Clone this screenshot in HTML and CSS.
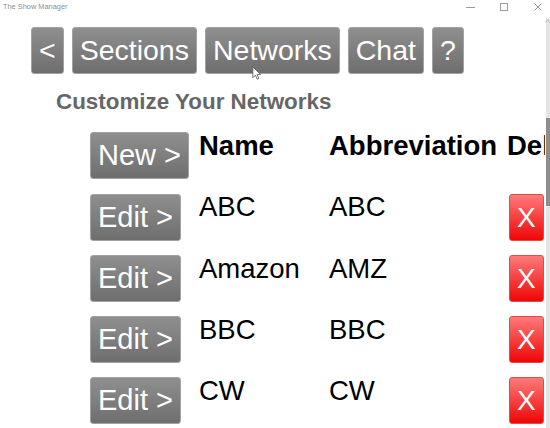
FILE: index.html
```html
<!DOCTYPE html>
<html>
<head>
<meta charset="utf-8">
<link rel="stylesheet" href="styles.css">
</head>
<body>
<div class="window">
  <div class="titlebar">
    <span class="title">The Show Manager</span>
    <div class="controls">
      <svg class="ctl ctl-min" width="9" height="9" viewBox="0 0 9 9"><line x1="0" y1="4.5" x2="9" y2="4.5" stroke="#9a9a9a" stroke-width="1"/></svg>
      <svg class="ctl ctl-max" width="8" height="8" viewBox="0 0 8 8"><rect x="0.5" y="0.5" width="7" height="7" fill="none" stroke="#9a9a9a" stroke-width="1"/></svg>
      <svg class="ctl ctl-close" width="8" height="8" viewBox="0 0 8 8"><path d="M0.5 0.5 L7.5 7.5 M7.5 0.5 L0.5 7.5" stroke="#9a9a9a" stroke-width="1"/></svg>
    </div>
  </div>
  <div class="client">
    <div class="content">
      <nav class="nav">
        <button class="btn">&lt;</button>
        <button class="btn">Sections</button>
        <button class="btn">Networks</button>
        <button class="btn">Chat</button>
        <button class="btn">?</button>
      </nav>
      <h1 class="heading">Customize Your Networks</h1>
      <div class="table">
        <div class="cell"><button class="btn btn-row">New &gt;</button></div>
        <div class="cell th">Name</div>
        <div class="cell th">Abbreviation</div>
        <div class="cell th">Delete</div>

        <div class="cell"><button class="btn btn-row">Edit &gt;</button></div>
        <div class="cell td">ABC</div>
        <div class="cell td">ABC</div>
        <div class="cell del"><button class="btn-x">X</button></div>

        <div class="cell"><button class="btn btn-row">Edit &gt;</button></div>
        <div class="cell td">Amazon</div>
        <div class="cell td">AMZ</div>
        <div class="cell del"><button class="btn-x">X</button></div>

        <div class="cell"><button class="btn btn-row">Edit &gt;</button></div>
        <div class="cell td">BBC</div>
        <div class="cell td">BBC</div>
        <div class="cell del"><button class="btn-x">X</button></div>

        <div class="cell"><button class="btn btn-row">Edit &gt;</button></div>
        <div class="cell td">CW</div>
        <div class="cell td">CW</div>
        <div class="cell del"><button class="btn-x">X</button></div>
      </div>
    </div>
    <div class="scrollbar">
      <svg class="sb-arrow" width="5" height="4" viewBox="0 0 5 4"><path d="M0.5 3.5 L2.5 0.8 L4.5 3.5" fill="none" stroke="#a8a8a8" stroke-width="0.8"/></svg>
      <div class="sb-thumb"></div>
    </div>
    <svg class="cursor" width="9" height="14" viewBox="0 0 12 19"><path d="M1 1 L1 16 L4.5 12.5 L7 18 L9.2 17 L6.8 11.6 L11.5 11.6 Z" fill="#ffffff" stroke="#555" stroke-width="1.1" stroke-linejoin="round"/></svg>
  </div>
</div>
</body>
</html>
```
FILE: styles.css
```css
* { box-sizing: border-box; }

html, body {
  margin: 0;
  padding: 0;
  background: #ffffff;
}

.window {
  width: 550px;
  height: 428px;
  overflow: hidden;
  background: #ffffff;
  font-family: "Liberation Sans", Arial, sans-serif;
}

.titlebar {
  height: 18px;
  display: flex;
  justify-content: space-between;
  align-items: flex-start;
}

.title {
  font-family: "Liberation Sans", Arial, sans-serif;
  font-size: 7.4px;
  line-height: 14px;
  color: #8e8e8e;
  padding-left: 3px;
}

.controls {
  display: flex;
  align-items: flex-start;
  gap: 0;
  padding-top: 2px;
}

.ctl { display: block; }
.ctl-min { margin-top: 1px; }
.ctl-max { margin-left: 25px; margin-top: 1px; }
.ctl-close { margin-left: 26px; margin-right: 8px; margin-top: 1px; }

.client {
  position: relative;
  height: 410px;
}

.content {
  width: 545px;
  height: 410px;
  overflow: hidden;
}

.nav {
  display: flex;
  gap: 8px;
  padding-left: 31px;
  margin-top: 9px;
  height: 47px;
}

.btn {
  font-family: "Liberation Sans", Arial, sans-serif;
  font-size: 28.5px;
  color: #ffffff;
  height: 47px;
  line-height: 45px;
  padding: 0 7px;
  border: 1px solid #a2a2a2;
  border-radius: 3px;
  background: linear-gradient(#8f8f8f, #6e6e6e);
  white-space: nowrap;
  cursor: default;
}

.heading {
  margin: 15px 0 0 0;
  padding-left: 56px;
  font-size: 22.4px;
  line-height: 26px;
  font-weight: bold;
  color: #666666;
}

.table {
  margin-top: 15px;
  margin-left: 90px;
  display: grid;
  grid-template-columns: 109px 130px 178px 140px;
  grid-auto-rows: 61.25px;
  align-items: start;
  white-space: nowrap;
}

.cell {
  font-size: 27.5px;
  line-height: 32px;
  color: #000000;
}

.th { font-weight: bold; }

.btn-row {
  font-size: 29px;
  margin-top: 2.3px;
  padding: 0 7px;
}

.del { padding-left: 2px; }

.btn-x {
  margin-top: 2.3px;
  font-family: "Liberation Sans", Arial, sans-serif;
  font-size: 28px;
  color: #ffffff;
  width: 34.5px;
  height: 47px;
  line-height: 45px;
  padding: 0;
  text-align: center;
  border: 1px solid #e24a4a;
  border-radius: 3px;
  background: linear-gradient(#ff7a7a, #ee0606);
}

.scrollbar {
  position: absolute;
  top: 0;
  right: 0;
  width: 4px;
  height: 410px;
  background: #e4e4e4;
}

.sb-arrow {
  position: absolute;
  top: 1px;
  left: -1px;
}

.sb-thumb {
  position: absolute;
  top: 100px;
  left: 0;
  width: 4px;
  height: 88px;
  background: #8e8e8e;
}

.cursor {
  position: absolute;
  left: 252px;
  top: 48px;
}
```
